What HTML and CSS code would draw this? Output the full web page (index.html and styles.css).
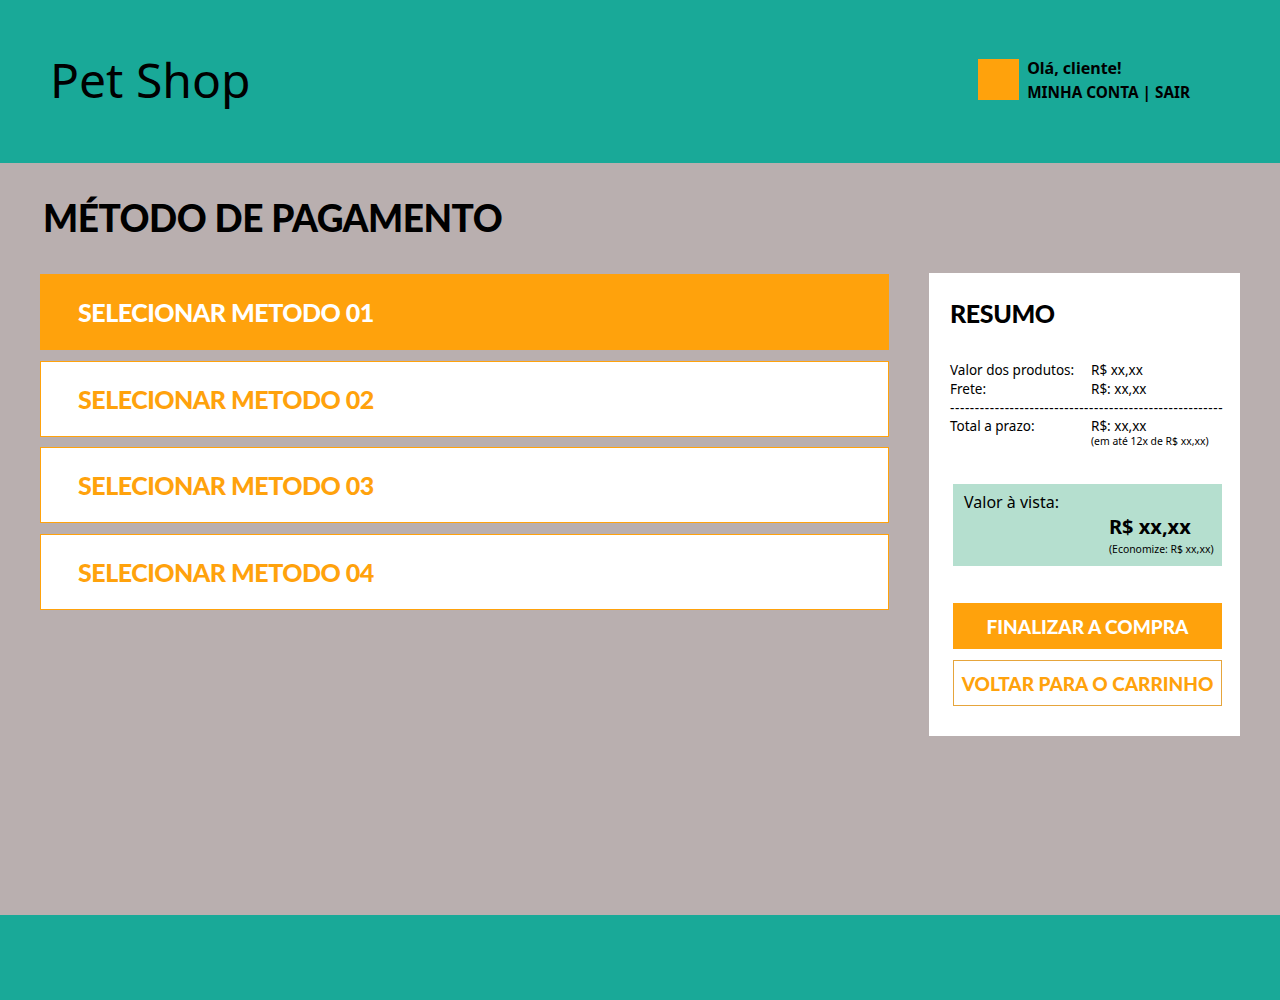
FILE: index.html
```html
<!DOCTYPE html>
<html lang="pt-BR">
<head>
<meta charset="utf-8">
<title>Pet Shop - Método de pagamento</title>
<link rel="stylesheet" href="styles.css">
</head>
<body>
<header class="topbar">
  <h1 class="brand">Pet Shop</h1>
  <div class="user">
    <div class="avatar"></div>
    <div class="user-text">
      <div class="hello">Olá, cliente!</div>
      <div class="links">MINHA CONTA | SAIR</div>
    </div>
  </div>
</header>
<main class="content">
  <h2 class="page-title">MÉTODO DE PAGAMENTO</h2>
  <div class="columns">
    <div class="methods">
      <div class="method active">SELECIONAR METODO 01</div>
      <div class="method">SELECIONAR METODO 02</div>
      <div class="method">SELECIONAR METODO 03</div>
      <div class="method">SELECIONAR METODO 04</div>
    </div>
    <aside class="summary">
      <h3 class="summary-title">RESUMO</h3>
      <div class="rows">
        <div class="row"><span class="label">Valor dos produtos:</span><span>R$ xx,xx</span></div>
        <div class="row"><span class="label">Frete:</span><span>R$: xx,xx</span></div>
      </div>
      <div class="dashes">-------------------------------------------------------</div>
      <div class="row"><span class="label">Total a prazo:</span><span>R$: xx,xx</span></div>
      <div class="row row-note"><span class="label"></span><span class="tiny">(em até 12x de R$ xx,xx)</span></div>
      <div class="cash">
        <div class="cash-label">Valor à vista:</div>
        <div class="cash-value">
          <div class="cash-price">R$ xx,xx</div>
          <div class="tiny">(Economize: R$ xx,xx)</div>
        </div>
      </div>
      <button class="btn btn-primary">FINALIZAR A COMPRA</button>
      <button class="btn btn-outline">VOLTAR PARA O CARRINHO</button>
    </aside>
  </div>
</main>
<footer class="bottombar"></footer>
</body>
</html>
```
FILE: styles.css
```css
* { box-sizing: border-box; }
html, body { margin: 0; padding: 0; }
body {
  font-family: "Noto Sans", "Open Sans", sans-serif;
  background: #b9afaf;
  color: #000;
  width: 1280px;
  height: 1000px;
  display: flex;
  flex-direction: column;
}
.topbar {
  background: #19a998;
  height: 163px;
  display: flex;
  align-items: center;
  justify-content: space-between;
  padding: 0 90px 0 50px;
  flex-shrink: 0;
}
.brand {
  margin: 0;
  font-weight: 400;
  font-size: 48px;
  line-height: 1;
  position: relative;
  top: -2px;
}
.user { display: flex; align-items: center; gap: 8px; position: relative; top: -2px; }
.avatar { width: 41px; height: 41px; background: #ffa20c; }
.user-text { font-weight: 700; line-height: 24px; }
.hello { font-size: 16px; }
.links { font-size: 15.3px; }
.content {
  flex: 1;
  padding: 0 40px;
}
.page-title {
  margin: 0;
  padding: 32px 0 0 3px;
  font-family: Lato, sans-serif;
  font-weight: 900;
  font-size: 37px;
  letter-spacing: -0.5px;
  line-height: 46px;
  height: 110px;
}
.columns { display: flex; gap: 40px; align-items: flex-start; }
.methods {
  width: 849px;
  display: flex;
  flex-direction: column;
  gap: 10.5px;
  padding-top: 1px;
}
.method {
  height: 76px;
  background: #fff;
  border: 1px solid #ffa20c;
  color: #ffa20c;
  font-family: Lato, sans-serif;
  font-weight: 900;
  font-size: 25px;
  letter-spacing: -0.5px;
  display: flex;
  align-items: center;
  padding-left: 37px;
}
.method.active { background: #ffa20c; color: #fff; }
.summary {
  width: 311px;
  background: #fff;
  padding: 24px 17px 30px 21px;
  font-size: 13.5px;
}
.summary-title {
  margin: 0 0 32px;
  font-family: Lato, sans-serif;
  font-weight: 900;
  font-size: 25px;
  letter-spacing: -0.4px;
  line-height: 32px;
}
.row { display: flex; line-height: 19px; }
.label { width: 141px; }
.dashes {
  line-height: 19px;
  white-space: nowrap;
  letter-spacing: 0.62px;
  margin: 0 0 -1px;
}
.tiny { font-size: 10.4px; line-height: 14px; white-space: nowrap; }
.row-note { margin-top: -2px; }
.cash {
  margin: 36px 0 37px 3px;
  width: 269px;
  height: 82px;
  background: #b5dfcf;
  padding: 8px 11px;
}
.cash-label { font-size: 16px; line-height: 20px; }
.cash-value { padding-left: 145px; }
.cash-price { font-size: 20px; font-weight: 700; line-height: 30px; }
.btn {
  display: block;
  width: 269px;
  height: 46px;
  margin-left: 3px;
  font-family: Lato, sans-serif;
  font-weight: 900;
  font-size: 19px;
  cursor: pointer;
  padding: 0;
}
.btn-primary { background: #ffa20c; color: #fff; border: none; margin-bottom: 11px; }
.btn-outline { background: #fff; color: #ffa20c; border: 1px solid #e6a53c; }
.bottombar {
  background: #19a998;
  height: 85px;
  flex-shrink: 0;
}
```
